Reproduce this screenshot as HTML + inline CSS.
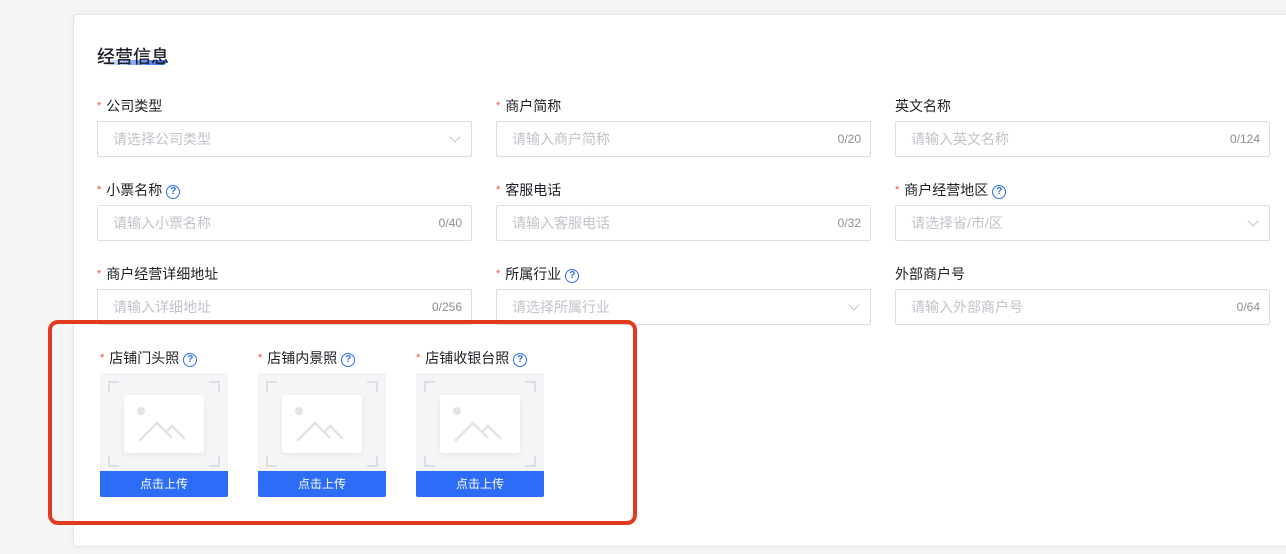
<!DOCTYPE html>
<html><head><meta charset="utf-8"><style>
*{box-sizing:border-box;margin:0;padding:0}
body{width:1286px;height:554px;background:#f5f5f6;font-family:"Liberation Sans","Noto Sans CJK SC",sans-serif;position:relative;overflow:hidden}
.card{position:absolute;left:73px;top:14px;width:1240px;height:533px;background:#fff;border:1px solid #e4e5e8;border-radius:4px;box-shadow:0 0 8px rgba(0,0,0,.04)}
.title{position:absolute;left:97px;top:43px;font-size:18px;color:#1d1f24;font-weight:500}
.uline{position:absolute;left:102px;top:60px;width:64px;height:5px;border-radius:3px;background:linear-gradient(90deg,rgba(45,108,246,0),rgba(45,108,246,.5) 40%,#2d6cf6)}
.lbl{position:absolute;font-size:14px;color:#1d1f24;line-height:16px;white-space:nowrap}
.lbl i{font-style:normal;color:#f04a3e;font-size:11px;margin-right:5px;vertical-align:2px}
.q{display:inline-block;width:14px;height:14px;border:1.4px solid #2d6cf6;border-radius:50%;color:#2d6cf6;font-size:10px;line-height:12px;text-align:center;font-weight:bold;margin-left:4px;vertical-align:1px}
.inp{position:absolute;width:375px;height:36px;border:1px solid #dcdee3;border-radius:2px;font-size:14px;color:#c0c3c9;padding-left:15px;line-height:34px}
.cnt{position:absolute;right:9px;top:0;font-size:12px;color:#8a8d93}
.arr{position:absolute;right:12px;top:11px;width:8px;height:8px;border-right:1px solid #c0c3c9;border-bottom:1px solid #c0c3c9;transform:rotate(45deg)}
.up{position:absolute;top:373px;width:128px;height:124px;background:#f4f5f7}
.up .c{position:absolute;width:11px;height:11px;border-color:#dcdee3;border-style:solid;border-width:0}
.up .pic{position:absolute;left:24px;top:22px;width:80px;height:58px;background:#fff;border-radius:3px;box-shadow:0 2px 6px rgba(0,0,0,.06)}
.up .btn{position:absolute;left:0;bottom:0;width:128px;height:26px;background:#2d6cf6;color:#fff;font-size:12px;text-align:center;line-height:26px;border-radius:0 0 2px 2px}
.red{position:absolute;left:48px;top:320px;width:589px;height:205px;border:4px solid #e2391f;border-radius:10px}
</style></head><body>
<div class="card"></div>
<div class="uline"></div>
<div class="title">经营信息</div>

<div class="lbl" style="left:97px;top:98px"><i>*</i>公司类型</div>
<div class="inp" style="left:97px;top:121px">请选择公司类型<span class="arr"></span></div>
<div class="lbl" style="left:496px;top:98px"><i>*</i>商户简称</div>
<div class="inp" style="left:496px;top:121px">请输入商户简称<span class="cnt">0/20</span></div>
<div class="lbl" style="left:895px;top:98px">英文名称</div>
<div class="inp" style="left:895px;top:121px">请输入英文名称<span class="cnt">0/124</span></div>

<div class="lbl" style="left:97px;top:182px"><i>*</i>小票名称<span class="q">?</span></div>
<div class="inp" style="left:97px;top:205px">请输入小票名称<span class="cnt">0/40</span></div>
<div class="lbl" style="left:496px;top:182px"><i>*</i>客服电话</div>
<div class="inp" style="left:496px;top:205px">请输入客服电话<span class="cnt">0/32</span></div>
<div class="lbl" style="left:895px;top:182px"><i>*</i>商户经营地区<span class="q">?</span></div>
<div class="inp" style="left:895px;top:205px">请选择省/市/区<span class="arr"></span></div>

<div class="lbl" style="left:97px;top:266px"><i>*</i>商户经营详细地址</div>
<div class="inp" style="left:97px;top:289px">请输入详细地址<span class="cnt">0/256</span></div>
<div class="lbl" style="left:496px;top:266px"><i>*</i>所属行业<span class="q">?</span></div>
<div class="inp" style="left:496px;top:289px">请选择所属行业<span class="arr"></span></div>
<div class="lbl" style="left:895px;top:266px">外部商户号</div>
<div class="inp" style="left:895px;top:289px">请输入外部商户号<span class="cnt">0/64</span></div>

<div class="lbl" style="left:100px;top:350px"><i>*</i>店铺门头照<span class="q">?</span></div>
<div class="lbl" style="left:258px;top:350px"><i>*</i>店铺内景照<span class="q">?</span></div>
<div class="lbl" style="left:416px;top:350px"><i>*</i>店铺收银台照<span class="q">?</span></div>

<div class="up" style="left:100px">
<span class="c" style="left:8px;top:8px;border-left-width:2px;border-top-width:2px"></span>
<span class="c" style="right:8px;top:8px;border-right-width:2px;border-top-width:2px"></span>
<span class="c" style="left:8px;top:83px;border-left-width:2px;border-bottom-width:2px"></span>
<span class="c" style="right:8px;top:83px;border-right-width:2px;border-bottom-width:2px"></span>
<div class="pic"><svg width="80" height="58"><circle cx="17" cy="16" r="4" fill="#e1e3e8"/><path d="M15 46 L33 28 L48 43 M42 37 L48 31 L61 44" stroke="#e1e3e8" stroke-width="2.5" fill="none"/></svg></div>
<div class="btn">点击上传</div></div>
<div class="up" style="left:258px">
<span class="c" style="left:8px;top:8px;border-left-width:2px;border-top-width:2px"></span>
<span class="c" style="right:8px;top:8px;border-right-width:2px;border-top-width:2px"></span>
<span class="c" style="left:8px;top:83px;border-left-width:2px;border-bottom-width:2px"></span>
<span class="c" style="right:8px;top:83px;border-right-width:2px;border-bottom-width:2px"></span>
<div class="pic"><svg width="80" height="58"><circle cx="17" cy="16" r="4" fill="#e1e3e8"/><path d="M15 46 L33 28 L48 43 M42 37 L48 31 L61 44" stroke="#e1e3e8" stroke-width="2.5" fill="none"/></svg></div>
<div class="btn">点击上传</div></div>
<div class="up" style="left:416px">
<span class="c" style="left:8px;top:8px;border-left-width:2px;border-top-width:2px"></span>
<span class="c" style="right:8px;top:8px;border-right-width:2px;border-top-width:2px"></span>
<span class="c" style="left:8px;top:83px;border-left-width:2px;border-bottom-width:2px"></span>
<span class="c" style="right:8px;top:83px;border-right-width:2px;border-bottom-width:2px"></span>
<div class="pic"><svg width="80" height="58"><circle cx="17" cy="16" r="4" fill="#e1e3e8"/><path d="M15 46 L33 28 L48 43 M42 37 L48 31 L61 44" stroke="#e1e3e8" stroke-width="2.5" fill="none"/></svg></div>
<div class="btn">点击上传</div></div>

<div class="red"></div>
</body></html>
